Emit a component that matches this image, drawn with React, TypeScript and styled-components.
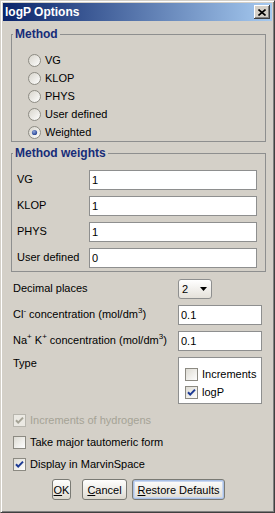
import { FC, Fragment, ReactNode } from "react";
import styled, { createGlobalStyle } from "styled-components";

const GlobalStyle = createGlobalStyle`
  html, body {
    margin: 0;
    padding: 0;
  }
  body {
    font-family: "Liberation Sans", Arial, sans-serif;
    font-size: 11px;
    color: #000;
    background: #d4d0c8;
  }
  * {
    box-sizing: border-box;
  }
`;

const Window = styled.div`
  width: 275px;
  height: 513px;
  background: #d4d0c8;
  border: 1px solid;
  border-color: #d4d0c8 #404040 #404040 #d4d0c8;
  box-shadow: inset 1px 1px #ffffff, inset -1px -1px #808080;
  padding: 2px;
  display: flex;
  flex-direction: column;
`;

const TitleBar = styled.div`
  height: 18px;
  display: flex;
  align-items: center;
  justify-content: space-between;
  padding: 0 2px 0 2px;
  background: linear-gradient(to right, #0a246a, #a6caf0);
`;

const Title = styled.span`
  color: #fff;
  font-weight: bold;
  font-size: 12px;
`;

const CloseButton = styled.div`
  width: 16px;
  height: 14px;
  display: flex;
  align-items: center;
  justify-content: center;
  background: #d4d0c8;
  box-shadow: inset -1px -1px #404040, inset 1px 1px #ffffff,
    inset -2px -2px #808080, inset 2px 2px #d4d0c8;
`;

const Content = styled.div`
  display: flex;
  flex-direction: column;
  padding: 6px 6px 0 8px;
`;

const Group = styled.fieldset<{ $gap?: number }>`
  margin: ${(p) => p.$gap ?? 0}px 0 0 0;
  padding: 0;
  min-width: 0;
  border: 1px solid #8e8f8f;
`;

const Legend = styled.legend`
  margin-left: 1px;
  padding: 0 2px;
  font-size: 12px;
  line-height: 14px;
  font-weight: bold;
  color: #172c78;
`;

const RadioList = styled.div`
  display: flex;
  flex-direction: column;
  padding: 10px 0 0 16px;
`;

const OptionRow = styled.label<{ $h: number; $disabled?: boolean }>`
  height: ${(p) => p.$h}px;
  display: flex;
  align-items: center;
  gap: 4px;
  color: ${(p) => (p.$disabled ? "#a5a396" : "#000")};
  white-space: nowrap;
`;

const WeightsGrid = styled.div`
  display: grid;
  grid-template-columns: 72px 168px;
  row-gap: 6px;
  align-items: center;
  padding: 10px 0 3px 5px;
`;

const FieldLabel = styled.span<{ $top?: boolean }>`
  align-self: ${(p) => (p.$top ? "start" : "center")};
  padding-top: ${(p) => (p.$top ? 2 : 0)}px;
  margin-top: -2px;
  white-space: nowrap;
`;

const TextBox = styled.input`
  height: 20px;
  width: 100%;
  margin: 0;
  padding: 0 2px;
  border: 1px solid #8e8f8f;
  background: #fff;
  font: inherit;
  color: #000;
  outline: none;
`;

const FormGrid = styled.div`
  display: grid;
  grid-template-columns: 165px 84px;
  row-gap: 6px;
  align-items: center;
  margin-top: 7px;
  padding-left: 2px;
`;

const Dropdown = styled.div`
  width: 34px;
  height: 20px;
  display: flex;
  align-items: center;
  justify-content: space-between;
  padding: 0 4px 0 3px;
  border: 1px solid #8e8f8f;
  border-radius: 3px;
  background: linear-gradient(to bottom, #ffffff, #e4e1da);
`;

const TypeBox = styled.div`
  height: 47px;
  display: flex;
  flex-direction: column;
  padding: 7px 0 0 6px;
  border: 1px solid #8e8f8f;
  background: #fff;
`;

const CheckList = styled.div`
  display: flex;
  flex-direction: column;
  margin-top: 5px;
  padding-left: 2px;
`;

const Sup = styled.sup`
  font-size: 8px;
  line-height: 0;
  vertical-align: 5px;
`;

const ButtonRow = styled.div`
  display: flex;
  justify-content: center;
  gap: 5px;
  margin-top: 4px;
`;

const Button = styled.div<{ $w: number; $focused?: boolean; $after?: number }>`
  width: ${(p) => p.$w}px;
  height: 21px;
  margin-right: ${(p) => p.$after ?? 0}px;
  display: flex;
  align-items: center;
  justify-content: center;
  border: 1px solid #7a7a74;
  border-radius: 3px;
  background: linear-gradient(to bottom, #fefefd, #e9e7e1 70%, #dcd8ce);
  box-shadow: ${(p) =>
    p.$focused ? "inset 0 0 0 1px #a9c0e6, inset 0 0 0 2px #c9d7ef" : "none"};
  white-space: nowrap;
`;

const RadioIcon: FC<{ checked?: boolean }> = ({ checked }) => (
  <svg width="13" height="13" viewBox="0 0 13 13">
    <defs>
      <linearGradient id="radioFill" x1="0" y1="0" x2="1" y2="1">
        <stop offset="0" stopColor="#d6d3ca" />
        <stop offset="1" stopColor="#ffffff" />
      </linearGradient>
      <radialGradient id="radioDot" cx="0.4" cy="0.35" r="0.7">
        <stop offset="0" stopColor="#8fa6dc" />
        <stop offset="1" stopColor="#1d3b8f" />
      </radialGradient>
    </defs>
    <circle cx="6.5" cy="6.5" r="6" fill="url(#radioFill)" stroke="#8c8a82" />
    {checked && <circle cx="6.5" cy="6.5" r="2.6" fill="url(#radioDot)" />}
  </svg>
);

const CheckIcon: FC<{ checked?: boolean; disabled?: boolean }> = ({ checked, disabled }) => (
  <svg width="13" height="13" viewBox="0 0 13 13">
    <defs>
      <linearGradient id="checkFill" x1="0" y1="0" x2="1" y2="1">
        <stop offset="0" stopColor="#dcdad2" />
        <stop offset="1" stopColor="#ffffff" />
      </linearGradient>
    </defs>
    <rect
      x="0.5"
      y="0.5"
      width="12"
      height="12"
      fill={disabled ? "#ebe9e3" : "url(#checkFill)"}
      stroke={disabled ? "#b8b6ae" : "#8c8a82"}
    />
    {checked && (
      <polyline
        points="3,6.3 5.2,8.6 10,3.6"
        fill="none"
        stroke={disabled ? "#a5a396" : "#1c3a94"}
        strokeWidth="2"
      />
    )}
  </svg>
);

const Radio: FC<{ label: string; checked?: boolean }> = ({ label, checked }) => (
  <OptionRow $h={18}>
    <RadioIcon checked={checked} />
    {label}
  </OptionRow>
);

const Check: FC<{ label: ReactNode; checked?: boolean; disabled?: boolean; h: number }> = ({
  label,
  checked,
  disabled,
  h,
}) => (
  <OptionRow $h={h} $disabled={disabled}>
    <CheckIcon checked={checked} disabled={disabled} />
    {label}
  </OptionRow>
);

const methods = ["VG", "KLOP", "PHYS", "User defined", "Weighted"];

const weights = [
  { name: "VG", value: "1" },
  { name: "KLOP", value: "1" },
  { name: "PHYS", value: "1" },
  { name: "User defined", value: "0" },
];

const App: FC = () => {
  return (
    <>
      <GlobalStyle />
      <Window>
        {/* Caption */}
        <TitleBar>
          <Title>logP Options</Title>
          <CloseButton>
            <svg width="8" height="7" viewBox="0 0 8 7">
              <path d="M0.5 0.5 L7.5 6.5 M7.5 0.5 L0.5 6.5" stroke="#000" strokeWidth="1.6" />
            </svg>
          </CloseButton>
        </TitleBar>

        <Content>
          <Group>
            <Legend>Method</Legend>
            <RadioList>
              {methods.map((m) => (
                <Radio key={m} label={m} checked={m === "Weighted"} />
              ))}
            </RadioList>
          </Group>

          <Group $gap={4}>
            <Legend>Method weights</Legend>
            <WeightsGrid>
              {weights.map((w) => (
                <Fragment key={w.name}>
                  <FieldLabel>{w.name}</FieldLabel>
                  <TextBox defaultValue={w.value} readOnly />
                </Fragment>
              ))}
            </WeightsGrid>
          </Group>

          <FormGrid>
            <FieldLabel>Decimal places</FieldLabel>
            <Dropdown>
              <span>2</span>
              <svg width="7" height="4" viewBox="0 0 7 4">
                <path d="M0 0 H7 L3.5 4 Z" fill="#000" />
              </svg>
            </Dropdown>

            <FieldLabel>
              Cl<Sup>-</Sup> concentration (mol/dm<Sup>3</Sup>)
            </FieldLabel>
            <TextBox defaultValue="0.1" readOnly />

            <FieldLabel>
              Na<Sup>+</Sup> K<Sup>+</Sup> concentration (mol/dm<Sup>3</Sup>)
            </FieldLabel>
            <TextBox defaultValue="0.1" readOnly />

            <FieldLabel $top>Type</FieldLabel>
            <TypeBox>
              <Check label="Increments" h={18} />
              <Check label="logP" h={18} checked />
            </TypeBox>
          </FormGrid>

          <CheckList>
            <Check label="Increments of hydrogens" h={22} checked disabled />
            <Check label="Take major tautomeric form" h={22} />
            <Check label="Display in MarvinSpace" h={22} checked />
          </CheckList>

          <ButtonRow>
            <Button $w={19} $after={6}>
              <u>O</u>K
            </Button>
            <Button $w={45}>
              <u>C</u>ancel
            </Button>
            <Button $w={93} $focused>
              <u>R</u>estore Defaults
            </Button>
          </ButtonRow>
        </Content>
      </Window>
    </>
  );
};

export default App;
